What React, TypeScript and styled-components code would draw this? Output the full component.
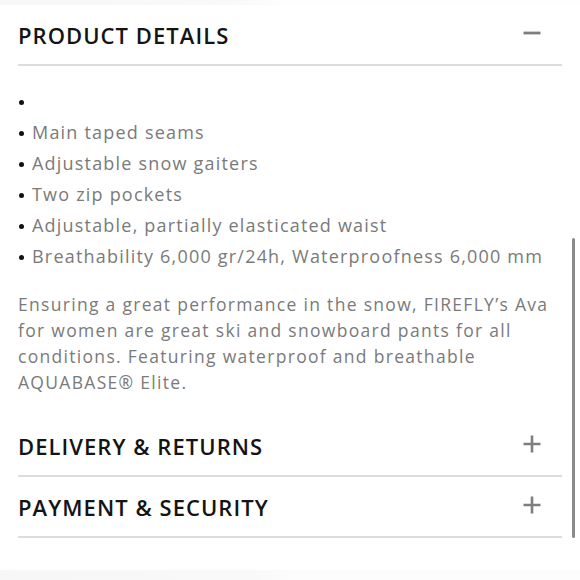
import React from "react";
import styled, { createGlobalStyle } from "styled-components";

const Global = createGlobalStyle`
  html, body { margin: 0; padding: 0; background: #fff; }
  body { font-family: "Open Sans", "Noto Sans", sans-serif; }
  * { box-sizing: border-box; }
`;

const Page = styled.div`
  position: relative;
  width: 580px;
  height: 580px;
  overflow: hidden;
  display: flex;
  flex-direction: column;
`;

const Band = styled.div<{ $h: number; $stop: number }>`
  height: ${(p) => p.$h}px;
  flex: none;
  background: linear-gradient(to right, #f7f7f7 0%, #f9f9f9 ${(p) => p.$stop - 8}%, #fdfdfd ${(p) => p.$stop}%);
`;

const Content = styled.div`
  flex: 1;
  padding: 0 18px;
  display: flex;
  flex-direction: column;
`;

const Header = styled.div`
  height: 61px;
  flex: none;
  display: flex;
  align-items: center;
  justify-content: space-between;
  border-bottom: 2px solid #dcdcdc;
`;

const Title = styled.h2`
  margin: 0;
  font-size: 22px;
  font-weight: 600;
  letter-spacing: 1.05px;
  color: #141414;
`;

const IconBox = styled.span`
  width: 28px;
  height: 28px;
  margin: 0 16px 4px 0;
  display: flex;
  align-items: center;
  justify-content: center;
  color: #7e7e7e;
`;

const Panel = styled.div`
  padding: 20px 0 0;
`;

const List = styled.ul`
  list-style: none;
  margin: 0;
  padding: 0;
`;

const Item = styled.li`
  display: flex;
  align-items: center;
  height: 31px;
  line-height: 31px;
  font-size: 18px;
  letter-spacing: 1.2px;
  color: #7a7a7a;
  &::before {
    content: "";
    width: 5px;
    height: 5px;
    border-radius: 50%;
    background: #111;
    margin: 2px 8px 0 1px;
    flex: none;
  }
`;

const Para = styled.p`
  margin: 19px 0 0;
  font-size: 17.5px;
  line-height: 26px;
  letter-spacing: 1.3px;
  color: #7a7a7a;
  padding-right: 10px;
  padding-bottom: 21px;
`;

const Scrollbar = styled.div`
  position: absolute;
  left: 572px;
  top: 238px;
  width: 3px;
  height: 300px;
  border-radius: 2px;
  background: #8a8a8a;
`;

const Minus = () => (
  <svg width="18" height="18" viewBox="0 0 18 18">
    <path d="M0.5 9h17" stroke="currentColor" strokeWidth="2.8" />
  </svg>
);
const Plus = () => (
  <svg width="18" height="18" viewBox="0 0 18 18">
    <path d="M0.5 9h17M9 0.5v17" stroke="currentColor" strokeWidth="2.6" />
  </svg>
);

const items = [
  "",
  "Main taped seams",
  "Adjustable snow gaiters",
  "Two zip pockets",
  "Adjustable, partially elasticated waist",
  "Breathability 6,000 gr/24h, Waterproofness 6,000 mm",
];

export default function App() {
  return (
    <>
      <Global />
      <Page>
        <Band $h={5} $stop={48} />
        <Content>
          <Header>
            <Title>PRODUCT DETAILS</Title>
            <IconBox><Minus /></IconBox>
          </Header>
          <Panel>
            <List>
              {items.map((t, i) => (
                <Item key={i}>{t}</Item>
              ))}
            </List>
            <Para>
              Ensuring a great performance in the snow, FIREFLY’s Ava for women are great ski and snowboard pants for all conditions. Featuring waterproof and breathable AQUABASE® Elite.
            </Para>
          </Panel>
          <Header>
            <Title>DELIVERY &amp; RETURNS</Title>
            <IconBox><Plus /></IconBox>
          </Header>
          <Header>
            <Title>PAYMENT &amp; SECURITY</Title>
            <IconBox><Plus /></IconBox>
          </Header>
        </Content>
        <Band $h={10} $stop={52} />
        <Scrollbar />
      </Page>
    </>
  );
}
